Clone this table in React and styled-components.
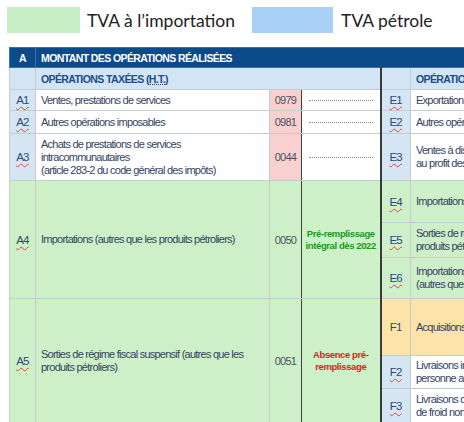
import React from "react";
import styled, { createGlobalStyle } from "styled-components";

const GlobalStyle = createGlobalStyle`
    html, body {
        margin: 0;
        padding: 0;
        background: #fff;
        overflow: hidden;
    }
`;

const Page = styled.div`
    width: 464px;
    height: 422px;
    overflow: hidden;
    padding: 7px 0 0 7px;
    box-sizing: border-box;
`;

const Legend = styled.div`
    display: flex;
    align-items: center;
    height: 26px;
`;

const Swatch = styled.div`
    width: ${(p) => p.$w}px;
    height: 26px;
    background-color: ${(p) => p.$color};
    margin-right: ${(p) => p.$gap}px;
`;

const LegendText = styled.div`
    font-family: Lato, "Open Sans", sans-serif;
    font-size: 17.5px;
    color: #222;
    margin-right: ${(p) => p.$gap || 0}px;
`;

const Table = styled.table`
    margin: 14px 0 0 2px;
    border-collapse: collapse;
    table-layout: fixed;
    width: 640px;
    font-family: "Liberation Sans", Arial, sans-serif;
    font-size: 11px;
    letter-spacing: -0.75px;
    color: #34445f;
    white-space: nowrap;
    td {
        border: 1px solid #c4ccd0;
        padding: 0;
        vertical-align: middle;
    }
`;

const HeadCell = styled.td`
    background-color: #0d4a8a;
    color: #fff;
    font-weight: bold;
    font-size: 10.5px;
    letter-spacing: -0.6px;
    height: 19px;
    text-align: ${(p) => (p.$center ? "center" : "left")};
    padding-left: ${(p) => (p.$center ? 0 : 5)}px !important;
    border-color: #3d6ea5 !important;
`;

const SubCell = styled.td`
    background-color: #d3e5f4;
    color: #1d4c8a;
    font-weight: bold;
    font-size: 10.5px;
    letter-spacing: -0.6px;
    height: 21px;
    padding-left: 5px !important;
    border-right: ${(p) => (p.$thick ? "2px solid #3a3a3a" : "1px solid #c4ccd0")} !important;
`;

const bg = {
    white: "#ffffff",
    blue: "#d5e5f4",
    green: "#cdf0c8",
    pink: "#f8d0d0",
    orange: "#fde3a8",
};

const CodeCell = styled.td`
    background-color: ${(p) => bg[p.$bg]};
    text-align: center;
    height: ${(p) => p.$h}px;
    font-size: 11.5px;
    color: #2c4a7a;
    span {
        text-decoration: ${(p) => (p.$plain ? "none" : "underline wavy #e0443a")};
        text-decoration-thickness: 1px;
        text-underline-offset: 2px;
    }
`;

const LabelCell = styled.td`
    background-color: ${(p) => bg[p.$bg]};
    padding: 1px 5px !important;
    line-height: 13px;
`;

const BoxCell = styled.td`
    background-color: ${(p) => bg[p.$bg]};
    text-align: center;
    color: #4b5262;
    border-left: 1px solid #3f3f3f !important;
    border-right: 1px solid #3f3f3f !important;
`;

const NoteCell = styled.td`
    background-color: ${(p) => bg[p.$bg]};
    text-align: center;
    border-right: 2px solid #3a3a3a !important;
`;

const Dots = styled.span`
    display: inline-block;
    width: 64px;
    border-bottom: 1px dotted #8a8a8a;
    transform: translateY(-3px);
`;

const Note = styled.div`
    font-weight: bold;
    font-size: 9.5px;
    letter-spacing: -0.4px;
    line-height: 12px;
    color: ${(p) => p.$color};
`;

const Code = ({ children, ...rest }) => (
    <CodeCell {...rest}>
        <span>{children}</span>
    </CodeCell>
);

const App = () => {
    return (
        <Page>
            <GlobalStyle />
            <Legend>
                <Swatch $w={73} $color="#c9efc6" $gap={7} />
                <LegendText $gap={17}>TVA à l’importation</LegendText>
                <Swatch $w={81} $color="#a9d0f7" $gap={8} />
                <LegendText>TVA pétrole</LegendText>
            </Legend>
            <Table>
                <colgroup>
                    <col style={{ width: 26 }} />
                    <col style={{ width: 234 }} />
                    <col style={{ width: 32 }} />
                    <col style={{ width: 79 }} />
                    <col style={{ width: 30 }} />
                    <col style={{ width: 239 }} />
                </colgroup>
                <tbody>
                    <tr>
                        <HeadCell $center>A</HeadCell>
                        <HeadCell colSpan={5}>MONTANT DES OPÉRATIONS RÉALISÉES</HeadCell>
                    </tr>
                    <tr>
                        <SubCell />
                        <SubCell colSpan={3} $thick>
                            OPÉRATIONS TAXÉES (<u style={{ textDecorationStyle: "dotted" }}>H.T.</u>)
                        </SubCell>
                        <SubCell />
                        <SubCell>OPÉRATIONS NON TAXÉES</SubCell>
                    </tr>
                    <tr>
                        <Code $bg="blue" $h={20}>A1</Code>
                        <LabelCell $bg="white">Ventes, prestations de services</LabelCell>
                        <BoxCell $bg="pink">0979</BoxCell>
                        <NoteCell $bg="white"><Dots /></NoteCell>
                        <Code $bg="blue">E1</Code>
                        <LabelCell $bg="white">Exportations hors UE</LabelCell>
                    </tr>
                    <tr>
                        <Code $bg="blue" $h={22}>A2</Code>
                        <LabelCell $bg="white">Autres opérations imposables</LabelCell>
                        <BoxCell $bg="pink">0981</BoxCell>
                        <NoteCell $bg="white"><Dots /></NoteCell>
                        <Code $bg="blue">E2</Code>
                        <LabelCell $bg="white">Autres opérations non imposables</LabelCell>
                    </tr>
                    <tr>
                        <Code $bg="blue" $h={46}>A3</Code>
                        <LabelCell $bg="white">
                            Achats de prestations de services
                            <br />
                            intracommunautaires
                            <br />
                            (article 283-2 du code général des impôts)
                        </LabelCell>
                        <BoxCell $bg="pink">0044</BoxCell>
                        <NoteCell $bg="white"><Dots /></NoteCell>
                        <Code $bg="blue">E3</Code>
                        <LabelCell $bg="white">
                            Ventes à distance taxables dans un autre État membre
                            <br />
                            au profit des personnes non assujetties
                        </LabelCell>
                    </tr>
                    <tr>
                        <Code $bg="green" rowSpan={3}>A4</Code>
                        <LabelCell $bg="green" rowSpan={3}>
                            Importations (autres que les produits pétroliers)
                        </LabelCell>
                        <BoxCell $bg="green" rowSpan={3}>0050</BoxCell>
                        <NoteCell $bg="green" rowSpan={3}>
                            <Note $color="#1a9a1a">
                                Pré-remplissage
                                <br />
                                intégral dès 2022
                            </Note>
                        </NoteCell>
                        <Code $bg="green" $h={41}>E4</Code>
                        <LabelCell $bg="green">Importations (autres que les produits pétroliers)</LabelCell>
                    </tr>
                    <tr>
                        <Code $bg="green" $h={34}>E5</Code>
                        <LabelCell $bg="green">
                            Sorties de régime fiscal suspensif (autres que les
                            <br />
                            produits pétroliers)
                        </LabelCell>
                    </tr>
                    <tr>
                        <Code $bg="green" $h={40}>E6</Code>
                        <LabelCell $bg="green">
                            Importations placées sous régime fiscal suspensif
                            <br />
                            (autres que les produits pétroliers)
                        </LabelCell>
                    </tr>
                    <tr>
                        <Code $bg="green" rowSpan={3}>A5</Code>
                        <LabelCell $bg="green" rowSpan={3}>
                            Sorties de régime fiscal suspensif (autres que les
                            <br />
                            produits pétroliers)
                        </LabelCell>
                        <BoxCell $bg="green" rowSpan={3}>0051</BoxCell>
                        <NoteCell $bg="green" rowSpan={3}>
                            <Note $color="#e01b1b">
                                Absence pré-
                                <br />
                                remplissage
                            </Note>
                        </NoteCell>
                        <Code $bg="orange" $plain $h={56}>F1</Code>
                        <LabelCell $bg="orange">Acquisitions intracommunautaires</LabelCell>
                    </tr>
                    <tr>
                        <Code $bg="blue" $h={32}>F2</Code>
                        <LabelCell $bg="white">
                            Livraisons intracommunautaires à destination d’une
                            <br />
                            personne assujettie
                        </LabelCell>
                    </tr>
                    <tr>
                        <Code $bg="blue" $h={34}>F3</Code>
                        <LabelCell $bg="white">
                            Livraisons d’électricité, de gaz naturel, de chaleur ou
                            <br />
                            de froid non imposables en France
                        </LabelCell>
                    </tr>
                </tbody>
            </Table>
        </Page>
    );
};

export default App;
